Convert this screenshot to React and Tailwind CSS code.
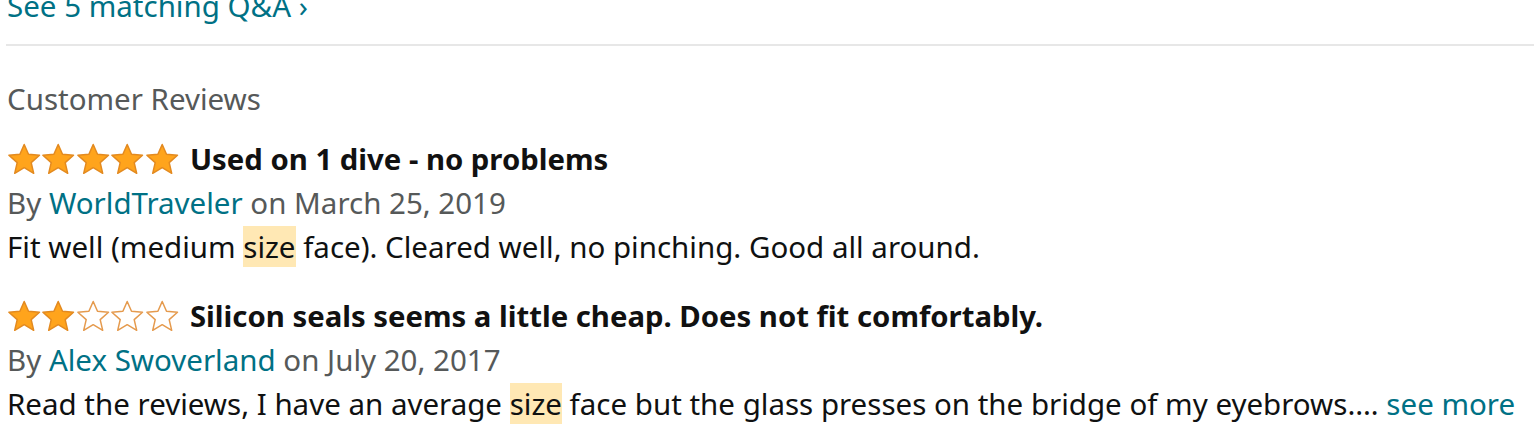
import React from "react";

const Star = ({ filled }) => (
  <svg width="34.4" height="32" viewBox="0 0 34 32" className="block">
    <path
      d="M17 1.5 L21.3 11.3 L32.3 12.3 L24 19.6 L26.5 30.3 L17 24.7 L7.5 30.3 L10 19.6 L1.7 12.3 L12.7 11.3 Z"
      fill={filled ? "#ffa41c" : "#ffffff"}
      stroke={filled ? "#e38a20" : "#e59a4d"}
      strokeWidth="1.5"
      strokeLinejoin="round"
    />
  </svg>
);

const Stars = ({ n }) => (
  <div className="flex shrink-0">
    {[0, 1, 2, 3, 4].map((i) => (
      <Star key={i} filled={i < n} />
    ))}
  </div>
);

const Hl = ({ children }) => (
  <span className="bg-[#ffe8b4]">{children}</span>
);

const Review = ({ stars, title, author, date, children }) => (
  <div className="flex flex-col">
    <div className="flex items-center gap-[11px] h-[44px]">
      <Stars n={stars} />
      <span className="font-bold text-[#111111] text-[29.3px]">{title}</span>
    </div>
    <div className="text-[#565959]">
      By <span className="text-[#007185]">{author}</span> on {date}
    </div>
    <div className="text-[#0f1111]">{children}</div>
  </div>
);

export default function App() {
  return (
    <div className="w-[1534px] h-[448px] overflow-hidden bg-white pl-[6px] font-['Noto_Sans',sans-serif] text-[29.5px] leading-[44px]">
      <div className="mt-[-16px] pl-[1px] text-[#007185]">See 5 matching Q&amp;A ›</div>
      <div className="mt-[16px] h-[2px] bg-[#e7e7e7]" />
      <div className="pl-[1px]">
        <div className="mt-[31px] text-[#565959]">Customer Reviews</div>
        <div className="mt-[16px] flex flex-col gap-[25px]">
          <Review stars={5} title="Used on 1 dive - no problems" author="WorldTraveler" date="March 25, 2019">
            Fit well (medium <Hl>size</Hl> face). Cleared well, no pinching. Good all around.
          </Review>
          <Review stars={2} title="Silicon seals seems a little cheap. Does not fit comfortably." author="Alex Swoverland" date="July 20, 2017">
            Read the reviews, I have an average <Hl>size</Hl> face but the glass presses on the bridge of my eyebrows.… <span className="text-[#007185]">see more</span>
          </Review>
        </div>
      </div>
    </div>
  );
}
